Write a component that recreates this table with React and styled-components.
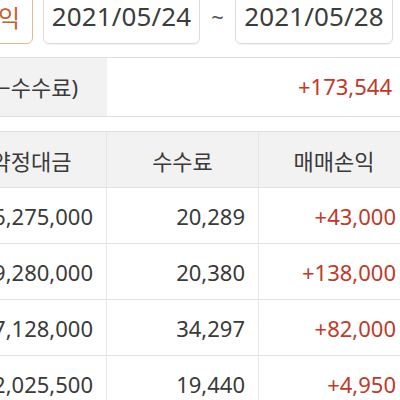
import React from "react";
import styled, { createGlobalStyle } from "styled-components";

const Global = createGlobalStyle`
  html, body { margin: 0; padding: 0; background: #fff; overflow: hidden; }
  body { font-family: "Noto Sans", "Noto Sans CJK KR", sans-serif; color: #3a3a3a; }
`;

const Page = styled.div`
  width: 450px;
  margin-left: -44px;
  margin-top: -12px;
  display: flex;
  flex-direction: column;
`;

const TopRow = styled.div`
  display: flex;
  align-items: stretch;
  height: 56px;
  padding: 0 13px 0 7px;
`;

const TabButton = styled.div`
  width: 70px;
  box-sizing: border-box;
  border: 1px solid #e2b89a;
  border-radius: 6px;
  display: flex;
  align-items: center;
  justify-content: center;
  color: #c4602c;
  font-size: 24px;
  margin-right: 10px;
  white-space: nowrap;
`;

const DateBox = styled.div`
  width: ${(p) => p.w}px;
  box-sizing: border-box;
  border: 1px solid #dcdcdc;
  border-radius: 6px;
  box-shadow: 0 1px 1px rgba(0,0,0,0.06);
  display: flex;
  align-items: center;
  justify-content: center;
  font-size: 26px;
  color: #3c3c3c;
  letter-spacing: 0.1px;
`;

const Tilde = styled.div`
  width: 35px;
  display: flex;
  align-items: center;
  justify-content: center;
  font-size: 22px;
  color: #555;
`;

const Summary = styled.div`
  margin-top: 13px;
  display: grid;
  grid-template-columns: 151px 1fr;
  height: 60px;
  border-top: 1px solid #dedede;
  border-bottom: 1px solid #dedede;
  box-sizing: border-box;
`;

const SumLabel = styled.div`
  background: #f2f2f2;
  display: flex;
  align-items: center;
  justify-content: flex-end;
  padding-right: 29px;
  padding-bottom: 3px;
  font-size: 22px;
  color: #3a3a3a;
  white-space: nowrap;
  overflow: hidden;
`;

const SumValue = styled.div`
  display: flex;
  align-items: center;
  justify-content: flex-end;
  padding-right: 14px;
  padding-bottom: 3px;
  font-size: 22px;
  color: #c0392b;
`;

const Table = styled.div`
  margin-top: 14px;
  display: grid;
  grid-template-columns: 151px 152px 150px;
  border-top: 1px solid #dedede;
`;

const Cell = styled.div`
  height: 56px;
  box-sizing: border-box;
  display: flex;
  align-items: center;
  justify-content: ${(p) => (p.head ? "center" : "flex-end")};
  padding-right: ${(p) => (p.head ? 0 : 13)}px;
  background: ${(p) => (p.head ? "#f2f2f2" : "#fff")};
  border-bottom: 1px solid #e2e2e2;
  border-right: ${(p) => (p.last ? "none" : "1px solid #e6e6e6")};
  font-size: 22px;
  color: ${(p) => (p.red ? "#c0392b" : "#3a3a3a")};
  white-space: nowrap;
`;

const rows = [
  ["6,275,000", "20,289", "+43,000"],
  ["9,280,000", "20,380", "+138,000"],
  ["7,128,000", "34,297", "+82,000"],
  ["2,025,500", "19,440", "+4,950"],
];

export default function App() {
  return (
    <>
      <Global />
      <Page>
        <TopRow>
          <TabButton>손익</TabButton>
          <DateBox w={157}>2021/05/24</DateBox>
          <Tilde>~</Tilde>
          <DateBox w={158}>2021/05/28</DateBox>
        </TopRow>
        <Summary>
          <SumLabel>(손익−수수료)</SumLabel>
          <SumValue>+173,544</SumValue>
        </Summary>
        <Table>
          <Cell head>약정대금</Cell>
          <Cell head>수수료</Cell>
          <Cell head last>매매손익</Cell>
          {rows.map((r, i) => (
            <React.Fragment key={i}>
              <Cell>{r[0]}</Cell>
              <Cell>{r[1]}</Cell>
              <Cell last red>{r[2]}</Cell>
            </React.Fragment>
          ))}
        </Table>
      </Page>
    </>
  );
}
